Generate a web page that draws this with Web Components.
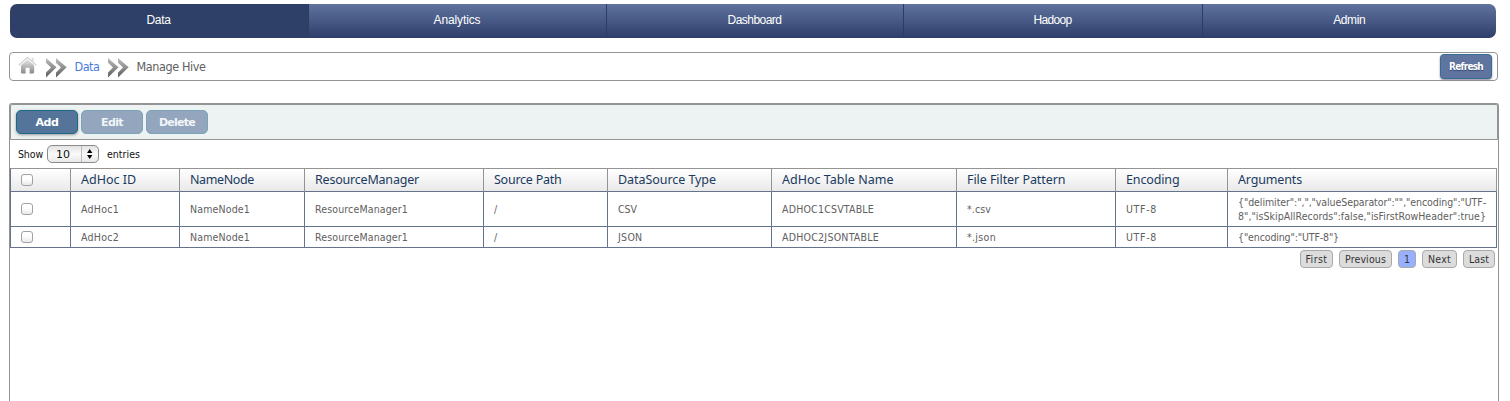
<!DOCTYPE html>
<html lang="en"><head><meta charset="utf-8"><title>Manage Hive</title>
<style>
body{margin:0;background:#fff;overflow:hidden;height:401px;font-family:"DejaVu Sans Condensed","DejaVu Sans","Noto Sans",sans-serif;font-stretch:condensed;font-size:10.5px;color:#606060}
</style></head><body>
<hive-page></hive-page>
<script>
const define=(name,html,init)=>customElements.define(name,class extends HTMLElement{
  constructor(){super();this.attachShadow({mode:'open'});}
  connectedCallback(){this.shadowRoot.innerHTML=typeof html==='function'?html(this):html;if(init)init(this);}
});
// Text run tracked to an exact width
define('fit-text','<style>:host{display:inline-block;white-space:nowrap;flex:none}</style><span><slot></slot></span>',el=>{
  const w=+el.getAttribute('w'),s=el.shadowRoot.querySelector('span');
  const n=el.textContent.length;
  const nat=s.getBoundingClientRect().width;
  s.style.letterSpacing=((w-nat)/n).toFixed(3)+'px';
  el.style.width=w+'px';
});
define('nav-item',`<style>
:host{display:flex;box-sizing:border-box;justify-content:center;height:34px;color:#fff;font:12px/32px "Liberation Sans",Arial,sans-serif;border-right:1px solid #2c3c66;background:linear-gradient(#5f739e,#2e3e6a)}
:host([active]){background:#2e4068}
:host(:last-child){border-right:0}
</style><slot></slot>`);
define('nav-bar',`<style>
:host{display:grid;grid-template-columns:299px 298px 297px 299px 1fr;margin:4px 14px 0 9.5px;height:34px;border-radius:7px;overflow:hidden}
</style><nav-item active><fit-text w="24">Data</fit-text></nav-item><nav-item><fit-text w="47">Analytics</fit-text></nav-item><nav-item><fit-text w="54">Dashboard</fit-text></nav-item><nav-item><fit-text w="38">Hadoop</fit-text></nav-item><nav-item><fit-text w="32">Admin</fit-text></nav-item>`);
define('home-icon',`<style>:host{display:block;width:19px;height:18px}svg{display:block}</style>
<svg width="19" height="18" viewBox="0 0 20 18" preserveAspectRatio="none"><defs><linearGradient id="g" x1="0" y1="0" x2="0" y2="1"><stop offset="0" stop-color="#e4e4e4"/><stop offset="1" stop-color="#8a8a8a"/></linearGradient></defs>
<path fill="url(#g)" d="M10 3.6L17 9.2V16.2Q17 17.5 15.7 17.5H12.2V11.7H8V17.5H4.4Q3.1 17.5 3.1 16.2V9.2Z"/><path fill="none" stroke="#d4d4d4" stroke-width="1.4" d="M.7 9.2L10 1.4L19.3 9.2"/><path fill="#dedede" d="M14.2 1.8h2.3v4.8l-2.3-2z"/></svg>`);
define('chevron-icon',`<style>:host{display:block;width:21px;height:20px}svg{display:block}</style>
<svg width="21" height="20" viewBox="0 0 21 20"><defs><linearGradient id="g" x1="0" y1="0" x2="0" y2="1"><stop offset="0" stop-color="#c0c0c0"/><stop offset="1" stop-color="#5c5c5c"/></linearGradient></defs>
<path fill="url(#g)" d="M0 0L10.5 9.3L0 19.6V14.5L5 9.5L0 4.7ZM10 0L20.7 9.3L10 19.6V14.5L15 9.5L10 4.7Z"/></svg>`);
define('crumb-bar',`<style>
:host{display:flex;box-sizing:border-box;height:29px;margin:14px 12px 0 9px;border:1px solid #949494;border-radius:4px;padding-left:8px;font-size:12.5px;line-height:28px}
home-icon{margin-top:3px}chevron-icon{margin-top:5px}
home-icon+chevron-icon{margin-left:8.5px}
.d{color:#4c7be0;margin:0 8px 0 8px}.m{margin-left:8px}
button{margin:1px 5px 0 auto;box-sizing:border-box;width:52px;height:25px;border:1px solid #376c94;border-radius:4px;padding:0;background:#6074a0;color:#fff;font:bold 10px/22px "DejaVu Sans Condensed","DejaVu Sans",sans-serif;font-stretch:condensed;text-shadow:0 1px 1px #34466b;box-shadow:0 1px 2px #889}
</style><home-icon></home-icon><chevron-icon></chevron-icon><fit-text class="d" w="25">Data</fit-text><chevron-icon></chevron-icon><fit-text class="m" w="69">Manage Hive</fit-text><button><fit-text w="34">Refresh</fit-text></button>`);
define('tool-button',`<style>
:host{display:flex;justify-content:center;box-sizing:border-box;width:62px;height:24px;border:1px solid #1b6b88;border-radius:5px;background:#547599;color:#fff;font:bold 11px/24px "DejaVu Sans",sans-serif;box-shadow:0 1px 3px #999}
:host([off]){background:#93a6bd;border-color:#7aa5b6;color:#f2f5f8;box-shadow:none}
</style><slot></slot>`);
define('tool-bar',`<style>
:host{display:flex;gap:3px;box-sizing:border-box;height:36px;padding:5px 5px 0;border:1px solid #949494;border-radius:2px 2px 0 0;background:#edf3f3}
</style><tool-button><fit-text w="23">Add</fit-text></tool-button><tool-button off><fit-text w="22">Edit</fit-text></tool-button><tool-button off><fit-text w="36">Delete</fit-text></tool-button>`);
define('length-menu',`<style>
:host{display:flex;height:28px;padding:0 8px;color:#111;line-height:28px}
.s{display:flex;box-sizing:border-box;width:52px;height:18px;margin:5px 8px 0 4px;border:1px solid #8b8b8b;border-radius:5px;background:linear-gradient(#e2e2e2,#fafafa 50%,#e8e8e8);font:11px/17px "DejaVu Sans",sans-serif;padding-left:8px}
.a{margin-left:auto;width:16px;height:16px;border-left:1px solid #bbb}svg{display:block}
</style><fit-text w="25">Show</fit-text><span class="s"><fit-text w="14">10</fit-text><span class="a"><svg width="16" height="16"><path d="M5 7L7.7 3L10.4 7ZM5 9L7.7 13L10.4 9Z" fill="#000"/></svg></span></span><fit-text w="33">entries</fit-text>`);
define('check-box',`<style>:host{display:block;box-sizing:border-box;width:12px;height:12px;border:1px solid #a2a2a2;border-radius:3px;background:linear-gradient(#fff 40%,#e9e9e9)}</style>`);
define('data-cell',`<style>:host{display:flex;flex-direction:column;justify-content:center;align-items:flex-start;box-sizing:border-box;padding-left:10px;border-right:1px solid var(--line);border-bottom:1px solid #66738c;line-height:14px}</style><slot></slot>`);
define('data-row',`<style>
:host{display:grid;grid-template-columns:60px 109px 125px 179px 124px 164px 185px 159px 112px 269px;box-sizing:border-box;--line:#66738c;border-left:1px solid #66738c}
:host([head]){--line:#949494;border-top:1px solid #949494;background:linear-gradient(#fff,#e8e8e8);color:#1b3a5e;font-family:"Noto Sans",sans-serif;font-stretch:normal;font-size:12.5px}
</style><slot></slot>`);
const heads=[['AdHoc ID',55],['NameNode',64],['ResourceManager',104],['Source Path',67.5],['DataSource Type',98],['AdHoc Table Name',111.5],['File Filter Pattern',98.5],['Encoding',53.5],['Arguments',64]];
const rows=[
 [35,['AdHoc1',38],['NameNode1',60],['ResourceManager1',93],['/',4],['CSV',19],['ADHOC1CSVTABLE',92],['*.csv',24],['UTF-8',31],['{"delimiter":",","valueSeparator":"","encoding":"UTF-',248,'8","isSkipAllRecords":false,"isFirstRowHeader":true}',248]],
 [21,['AdHoc2',38],['NameNode1',60],['ResourceManager1',93],['/',4],['JSON',24.5],['ADHOC2JSONTABLE',97],['*.json',29],['UTF-8',31],['{"encoding":"UTF-8"}',101]]];
const cell=c=>'<data-cell>'+c.map((t,i)=>i%2?'':`<fit-text w="${c[i+1]}">${t}</fit-text>`).join('')+'</data-cell>';
define('data-grid',()=>`<style>:host{display:block}data-row{height:var(--h)}</style><data-row head style="--h:24px"><data-cell><check-box></check-box></data-cell>${heads.map(cell).join('')}</data-row>`+
 rows.map(([h,...c])=>`<data-row style="--h:${h}px"><data-cell><check-box></check-box></data-cell>${c.map(cell).join('')}</data-row>`).join(''));
define('page-button',`<style>
:host{display:flex;justify-content:center;box-sizing:border-box;height:18px;border:1px solid #a9a9a9;border-radius:4px;background:#dcdcdc;color:#333;line-height:16px}
:host([on]){background:#99b0ff}
</style><slot></slot>`);
define('page-list',`<style>:host{display:flex;justify-content:flex-end;gap:6px;padding:2px 2px 0}</style>
<page-button style="width:33px"><fit-text w="22">First</fit-text></page-button><page-button style="width:53px"><fit-text w="41">Previous</fit-text></page-button><page-button on style="width:18px"><fit-text w="6">1</fit-text></page-button><page-button style="width:35px"><fit-text w="23">Next</fit-text></page-button><page-button style="width:32px"><fit-text w="20">Last</fit-text></page-button>`);
define('hive-panel',`<style>:host{display:block;box-sizing:border-box;width:1490px;height:298px;margin:22px 0 0 9px;border:1px solid #949494;border-bottom:0;border-radius:3px 3px 0 0}
data-grid{width:1487px}page-list{width:1487px;box-sizing:border-box}
</style><tool-bar></tool-bar><length-menu></length-menu><data-grid></data-grid><page-list></page-list>`);
define('hive-page',`<style>:host{display:flow-root}</style><nav-bar></nav-bar><crumb-bar></crumb-bar><hive-panel></hive-panel>`);
</script></body></html>
